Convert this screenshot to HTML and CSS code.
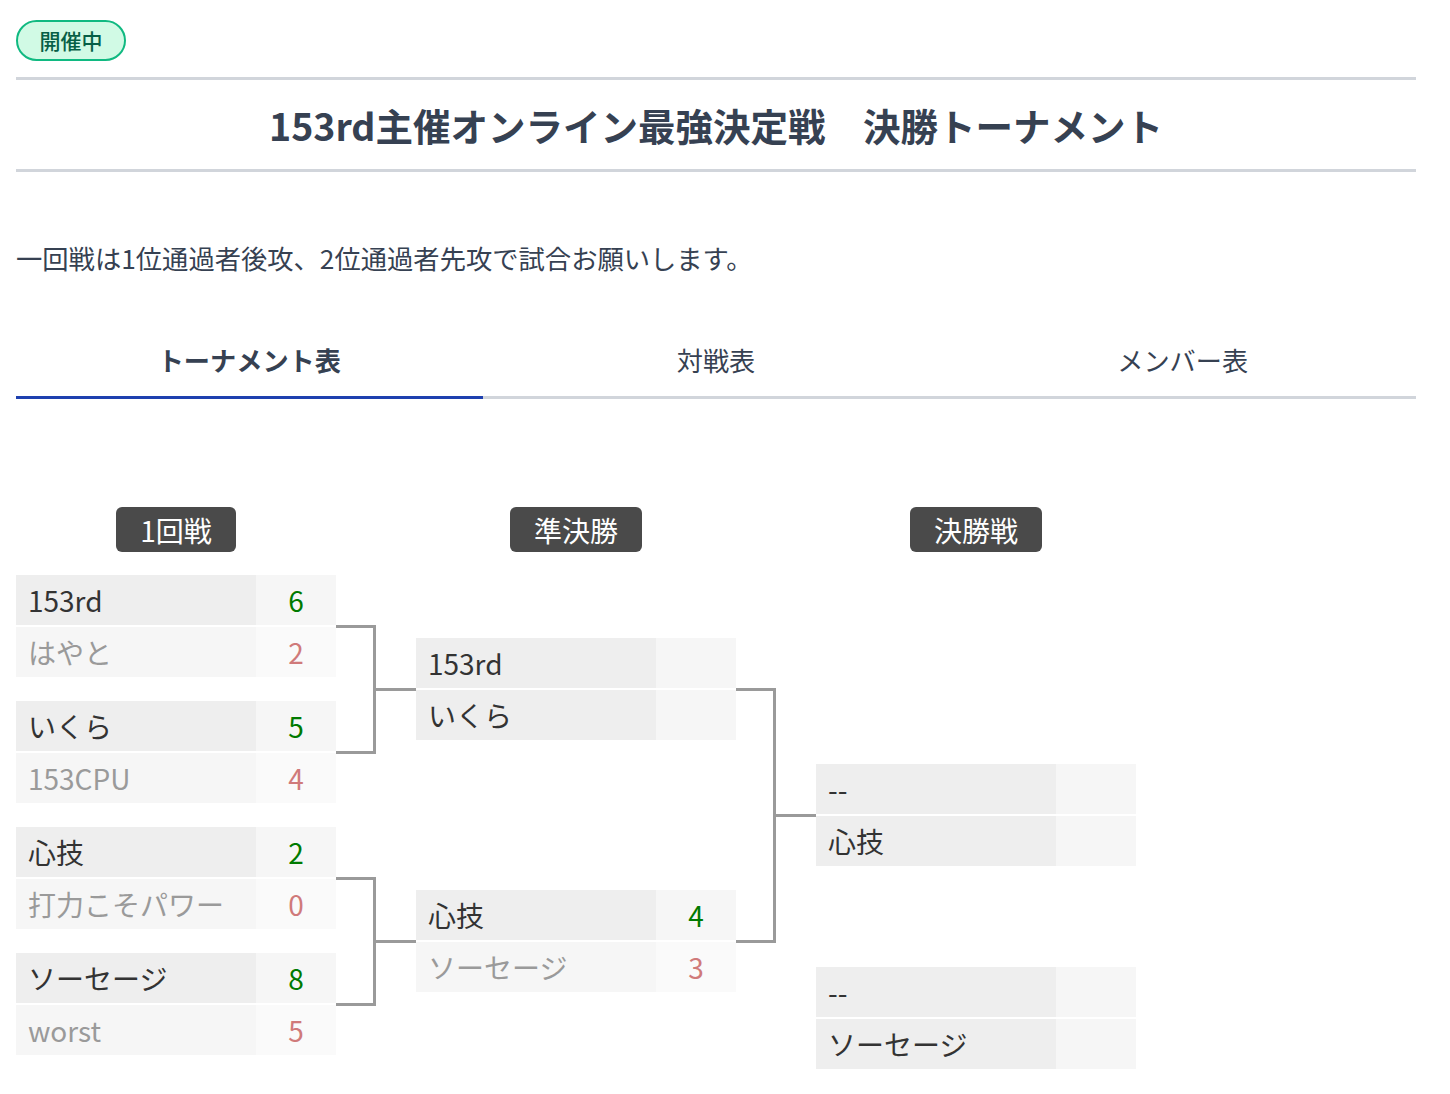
FILE: index.html
```html
<!DOCTYPE html>
<html lang="ja">
<head>
<meta charset="utf-8">
<title>153rd主催オンライン最強決定戦　決勝トーナメント</title>
<link rel="stylesheet" href="styles.css">
</head>
<body>
<div class="page">
  <div class="status-row"><span class="badge">開催中</span></div>
  <h1 class="title">153rd主催オンライン最強決定戦　決勝トーナメント</h1>
  <p class="note">一回戦は1位通過者後攻、2位通過者先攻で試合お願いします。</p>
  <nav class="tabs">
    <div class="tab active">トーナメント表</div>
    <div class="tab">対戦表</div>
    <div class="tab">メンバー表</div>
  </nav>

  <div class="bracket">
    <div class="round round1">
      <div class="round-head"><span class="round-label">1回戦</span></div>
      <div class="matches">
        <div class="match">
          <div class="row win"><span class="name">153rd</span><span class="score">6</span></div>
          <div class="row lose"><span class="name">はやと</span><span class="score">2</span></div>
        </div>
        <div class="match">
          <div class="row win"><span class="name">いくら</span><span class="score">5</span></div>
          <div class="row lose"><span class="name">153CPU</span><span class="score">4</span></div>
        </div>
        <div class="match">
          <div class="row win"><span class="name">心技</span><span class="score">2</span></div>
          <div class="row lose"><span class="name">打力こそパワー</span><span class="score">0</span></div>
        </div>
        <div class="match">
          <div class="row win"><span class="name">ソーセージ</span><span class="score">8</span></div>
          <div class="row lose"><span class="name">worst</span><span class="score">5</span></div>
        </div>
      </div>
    </div>

    <div class="connector">
      <svg width="80" height="492" viewBox="0 0 80 492" fill="none" stroke="#9a9a9a" stroke-width="3">
        <path d="M0 51.5 H38.5 V177.5 H0"/>
        <path d="M38.5 114.5 H80"/>
        <path d="M0 303.5 H38.5 V429.5 H0"/>
        <path d="M38.5 366.5 H80"/>
      </svg>
    </div>

    <div class="round round2">
      <div class="round-head"><span class="round-label">準決勝</span></div>
      <div class="matches">
        <div class="match">
          <div class="row open"><span class="name">153rd</span><span class="score"></span></div>
          <div class="row open"><span class="name">いくら</span><span class="score"></span></div>
        </div>
        <div class="match">
          <div class="row win"><span class="name">心技</span><span class="score">4</span></div>
          <div class="row lose"><span class="name">ソーセージ</span><span class="score">3</span></div>
        </div>
      </div>
    </div>

    <div class="connector">
      <svg width="80" height="492" viewBox="0 0 80 492" fill="none" stroke="#9a9a9a" stroke-width="3">
        <path d="M0 114.5 H38.5 V366.5 H0"/>
        <path d="M38.5 240.5 H80"/>
      </svg>
    </div>

    <div class="round round3">
      <div class="round-head"><span class="round-label">決勝戦</span></div>
      <div class="matches">
        <div class="match">
          <div class="row open"><span class="name">--</span><span class="score"></span></div>
          <div class="row open"><span class="name">心技</span><span class="score"></span></div>
        </div>
        <div class="match">
          <div class="row open"><span class="name">--</span><span class="score"></span></div>
          <div class="row open"><span class="name">ソーセージ</span><span class="score"></span></div>
        </div>
      </div>
    </div>
  </div>
</div>
</body>
</html>
```

FILE: styles.css
```css
* { box-sizing: border-box; }

body {
  margin: 0;
  background: #ffffff;
  font-family: "Noto Sans CJK JP", "Noto Sans", sans-serif;
  color: #364152;
}

.page {
  width: 1400px;
  margin-left: 16px;
  padding-top: 20px;
}

.status-row {
  display: flex;
  height: 41px;
}

.badge {
  display: inline-flex;
  align-items: center;
  justify-content: center;
  width: 110px;
  height: 41px;
  border: 2px solid #10b981;
  border-radius: 999px;
  background: #d1fae5;
  color: #065f46;
  font-size: 21px;
  font-weight: 500;
  line-height: 1;
}

.title {
  margin: 16px 0 0;
  border-top: 3px solid #d1d5db;
  border-bottom: 3px solid #d1d5db;
  padding: 16px 0;
  text-align: center;
  font-size: 37.5px;
  line-height: 57px;
  font-weight: 700;
  color: #364152;
}

.note {
  margin: 66px 0 0;
  font-size: 26.3px;
  line-height: 39px;
  color: #364152;
}

.tabs {
  display: flex;
  margin-top: 48px;
  border-bottom: 3px solid #d1d5db;
}

.tab {
  flex: 1;
  text-align: center;
  font-size: 26.2px;
  line-height: 39px;
  padding: 16px 0 16px;
  margin-bottom: -3px;
  border-bottom: 3px solid transparent;
  color: #364152;
}

.tab.active {
  font-weight: 700;
  border-bottom-color: #1e40af;
}

.bracket {
  display: flex;
  margin-top: 108px;
}

.round {
  width: 320px;
  display: flex;
  flex-direction: column;
}

.round-head {
  display: flex;
  justify-content: center;
  height: 45px;
  margin-bottom: 23px;
}

.round-label {
  display: inline-flex;
  align-items: center;
  height: 45px;
  padding: 0 24px;
  border-radius: 6px;
  background: #4a4a4a;
  color: #ffffff;
  font-size: 28px;
  line-height: 1;
}

.matches {
  display: flex;
  flex-direction: column;
}

.round1 .matches { gap: 24px; }
.round2 .matches { padding-top: 63px; gap: 150px; }
.round3 .matches { padding-top: 189px; gap: 101px; }

.match {
  display: flex;
  flex-direction: column;
  gap: 2px;
}

.row {
  display: flex;
  height: 50px;
  font-size: 28px;
  line-height: 50px;
}

.name {
  width: 240px;
  padding-left: 12px;
  white-space: nowrap;
}

.score {
  width: 80px;
  text-align: center;
}

.row.win .name,
.row.open .name { background: #eeeeee; color: #333333; }
.row.win .score,
.row.open .score { background: #f6f6f6; }
.row.win .score { color: #007a00; }

.row.lose .name { background: #f6f6f6; color: #9a9a9a; }
.row.lose .score { background: #fafafa; color: #d07a7a; }

.connector {
  width: 80px;
  padding-top: 68px;
}

.connector svg { display: block; }
```
